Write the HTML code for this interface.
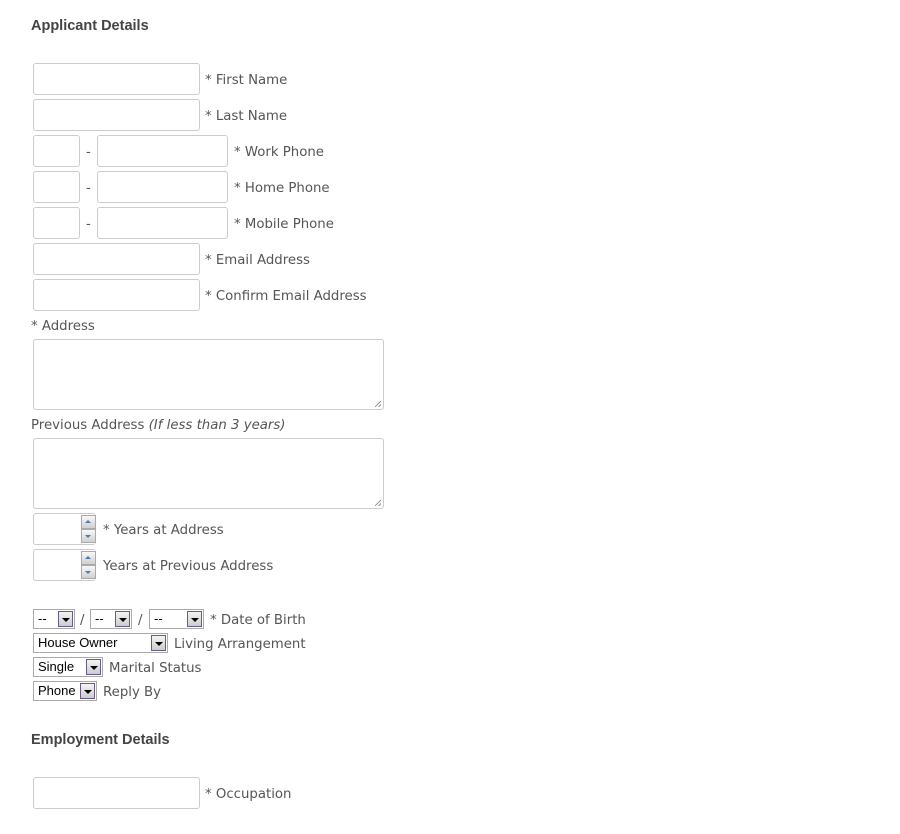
<!DOCTYPE html>
<html><head><style>
body{margin:0;width:900px;height:834px;background:#fff;font-family:"DejaVu Sans",sans-serif;font-size:13.3px;color:#555;position:relative;overflow:hidden}
.a{position:absolute;line-height:16px;white-space:nowrap;margin-top:2px}
.i{position:absolute;border:1px solid #ccc;border-radius:3px;box-sizing:border-box;background:#fff}
.h{font-family:"Liberation Sans",sans-serif;font-size:14.5px;font-weight:bold;color:#444;margin-top:1px}
.s{position:absolute;height:20px;border:1px solid #aaa;box-sizing:border-box;background:#fff;font-family:"Liberation Sans",sans-serif;font-size:13px;color:#000;line-height:18px;padding-left:4px}
.s b{position:absolute;right:1px;top:1px;width:15px;height:16px;border:1px solid #6a5a8a;box-sizing:border-box;background:linear-gradient(#f4f4f4,#ccc)}
.s b:after{content:"";position:absolute;left:3px;top:6px;border-left:4px solid transparent;border-right:4px solid transparent;border-top:4px solid #000}
.sp{position:absolute;width:15px;height:14px;border:1px solid #aaa;box-sizing:border-box;background:linear-gradient(#f8f8f8,#d0d0d0)}
.sp.u:after{content:"";position:absolute;left:3px;top:4px;border-left:3px solid transparent;border-right:3px solid transparent;border-bottom:3px solid #4a7ab0}
.sp.d:after{content:"";position:absolute;left:3px;top:5px;border-left:3px solid transparent;border-right:3px solid transparent;border-top:3px solid #4a7ab0}
.rz{position:absolute;right:2px;bottom:2px;width:6px;height:6px;background:linear-gradient(135deg,transparent 45%,#999 45%,#999 55%,transparent 55%,transparent 75%,#999 75%,#999 85%,transparent 85%)}
</style></head><body>
<div class="a h" style="left:31px;top:17px">Applicant Details</div>

<div class="i" style="left:33px;top:63px;width:167px;height:32px"></div><div class="a" style="left:205px;top:71px">* First Name</div>
<div class="i" style="left:33px;top:99px;width:167px;height:32px"></div><div class="a" style="left:205px;top:107px">* Last Name</div>

<div class="i" style="left:33px;top:135px;width:47px;height:32px"></div><div class="a" style="left:86px;top:143px">-</div><div class="i" style="left:97px;top:135px;width:131px;height:32px"></div><div class="a" style="left:234px;top:143px">* Work Phone</div>
<div class="i" style="left:33px;top:171px;width:47px;height:32px"></div><div class="a" style="left:86px;top:179px">-</div><div class="i" style="left:97px;top:171px;width:131px;height:32px"></div><div class="a" style="left:234px;top:179px">* Home Phone</div>
<div class="i" style="left:33px;top:207px;width:47px;height:32px"></div><div class="a" style="left:86px;top:215px">-</div><div class="i" style="left:97px;top:207px;width:131px;height:32px"></div><div class="a" style="left:234px;top:215px">* Mobile Phone</div>

<div class="i" style="left:33px;top:243px;width:167px;height:32px"></div><div class="a" style="left:205px;top:251px">* Email Address</div>
<div class="i" style="left:33px;top:279px;width:167px;height:32px"></div><div class="a" style="left:205px;top:287px">* Confirm Email Address</div>

<div class="a" style="left:31px;top:317px">* Address</div>
<div class="i" style="left:33px;top:339px;width:351px;height:71px"><div class="rz"></div></div>
<div class="a" style="left:31px;top:416px">Previous Address <i>(If less than 3 years)</i></div>
<div class="i" style="left:33px;top:438px;width:351px;height:71px"><div class="rz"></div></div>

<div class="i" style="left:33px;top:513px;width:63px;height:32px;border-right:none"></div>
<div class="sp u" style="left:81px;top:515px"></div><div class="sp d" style="left:81px;top:529px"></div>
<div class="a" style="left:103px;top:521px">* Years at Address</div>
<div class="i" style="left:33px;top:549px;width:63px;height:32px;border-right:none"></div>
<div class="sp u" style="left:81px;top:551px"></div><div class="sp d" style="left:81px;top:565px"></div>
<div class="a" style="left:103px;top:557px">Years at Previous Address</div>

<div class="s" style="left:33px;top:609px;width:42px">--<b></b></div>
<div class="a" style="left:80px;top:611px">/</div>
<div class="s" style="left:90px;top:609px;width:42px">--<b></b></div>
<div class="a" style="left:138px;top:611px">/</div>
<div class="s" style="left:149px;top:609px;width:55px">--<b></b></div>
<div class="a" style="left:210px;top:611px">* Date of Birth</div>

<div class="s" style="left:33px;top:633px;width:135px">House Owner<b></b></div>
<div class="a" style="left:174px;top:635px">Living Arrangement</div>
<div class="s" style="left:33px;top:657px;width:70px">Single<b></b></div>
<div class="a" style="left:109px;top:659px">Marital Status</div>
<div class="s" style="left:33px;top:681px;width:64px">Phone<b></b></div>
<div class="a" style="left:103px;top:683px">Reply By</div>

<div class="a h" style="left:31px;top:731px">Employment Details</div>
<div class="i" style="left:33px;top:777px;width:167px;height:32px"></div><div class="a" style="left:205px;top:785px">* Occupation</div>
</body></html>
